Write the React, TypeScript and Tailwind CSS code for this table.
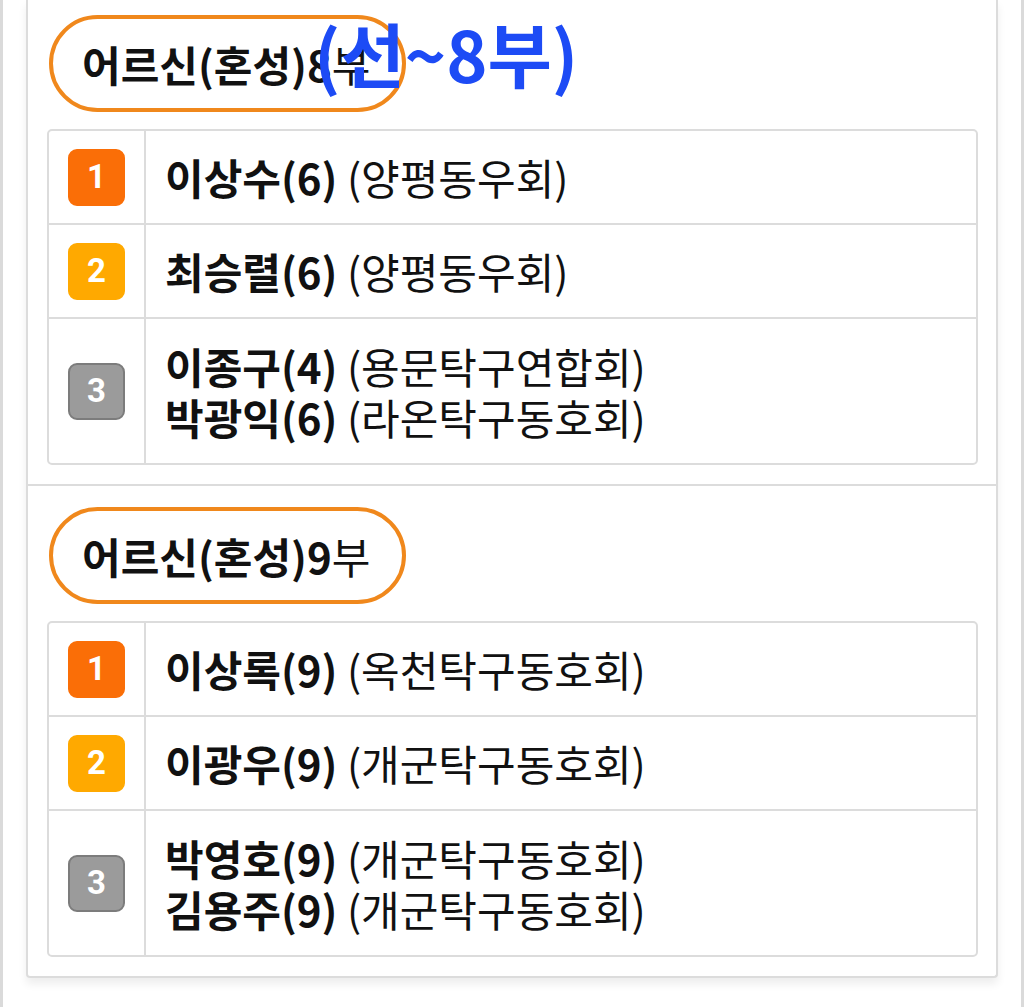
import React from "react";

type Entry = { name: string; score: string; club: string };
type Row = { rank: number; entries: Entry[] };
type Section = { title: string; num: string; rows: Row[]; overlay?: boolean };

const sections: Section[] = [
  {
    title: "어르신(혼성)",
    num: "8",
    overlay: true,
    rows: [
      { rank: 1, entries: [{ name: "이상수", score: "(6)", club: "(양평동우회)" }] },
      { rank: 2, entries: [{ name: "최승렬", score: "(6)", club: "(양평동우회)" }] },
      {
        rank: 3,
        entries: [
          { name: "이종구", score: "(4)", club: "(용문탁구연합회)" },
          { name: "박광익", score: "(6)", club: "(라온탁구동호회)" },
        ],
      },
    ],
  },
  {
    title: "어르신(혼성)",
    num: "9",
    rows: [
      { rank: 1, entries: [{ name: "이상록", score: "(9)", club: "(옥천탁구동호회)" }] },
      { rank: 2, entries: [{ name: "이광우", score: "(9)", club: "(개군탁구동호회)" }] },
      {
        rank: 3,
        entries: [
          { name: "박영호", score: "(9)", club: "(개군탁구동호회)" },
          { name: "김용주", score: "(9)", club: "(개군탁구동호회)" },
        ],
      },
    ],
  },
];

const font = { fontFamily: '"Noto Sans CJK KR", "Noto Sans", sans-serif' };

function Badge({ rank }: { rank: number }) {
  const cls =
    rank === 1
      ? "bg-[#fa6e07] border-[#fa6e07]"
      : rank === 2
      ? "bg-[#ffa900] border-[#ffa900]"
      : "bg-[#9b9b9b] border-[#7c7c7c]";
  return (
    <div
      className={`w-[57px] h-[57px] rounded-[9px] border-2 flex items-center justify-center text-white text-[33px] font-bold ${cls}`}
      style={{ fontFamily: 'Roboto, "Liberation Sans", sans-serif' }}
    >
      {rank}
    </div>
  );
}

function Table({ rows }: { rows: Row[] }) {
  return (
    <div className="border-2 border-[#dcdcdc] rounded-[5px] flex flex-col">
      {rows.map((r, i) => (
        <div key={i} className={`flex ${i > 0 ? "border-t-2 border-[#dcdcdc]" : ""}`}>
          <div className="w-[97px] shrink-0 flex items-center justify-center border-r-2 border-[#dcdcdc]">
            <Badge rank={r.rank} />
          </div>
          <div
            className={`flex-1 pl-[19px] py-[21px] text-[42px] text-[#111] ${
              r.entries.length > 1 ? "leading-[51px]" : "leading-[50px]"
            }`}
          >
            {r.entries.map((e, j) => (
              <div key={j} className="whitespace-nowrap">
                <span className="font-bold">
                  {e.name}
                  {e.score}
                </span>{" "}
                <span className="font-normal">{e.club}</span>
              </div>
            ))}
          </div>
        </div>
      ))}
    </div>
  );
}

function Pill({ title, num, overlay }: { title: string; num: string; overlay?: boolean }) {
  return (
    <div className="relative ml-[2px] w-[357px] h-[97px] rounded-full border-[4px] border-[#f0881c] flex items-center pl-[29px]">
      <span className="text-[42px] leading-[50px] text-[#111] whitespace-nowrap">
        <span className="font-semibold">{title}</span>
        <span className="font-bold">{num}</span>
        <span className="font-normal">부</span>
      </span>
      {overlay && (
        <span className="absolute left-[261px] top-[-6px] text-[70px] leading-[80px] font-bold text-[#1d4bf5] whitespace-nowrap">
          (선~8부)
        </span>
      )}
    </div>
  );
}

export default function App() {
  return (
    <div className="w-[1024px] h-[1007px] bg-white overflow-hidden" style={font}>
      <div className="h-full border-x-[3px] border-[#dadada] px-[23px]">
        <div className="border-2 border-t-0 border-[#dcdcdc] rounded-b-[4px] shadow-[0_6px_8px_rgba(0,0,0,0.07)] bg-white">
          {sections.map((s, i) => (
            <div
              key={i}
              className={`pl-[19px] pr-[18px] pb-[19px] ${i > 0 ? "border-t-2 border-[#dcdcdc] pt-[21px]" : "pt-[15px]"}`}
            >
              <Pill title={s.title} num={s.num} overlay={s.overlay} />
              <div className="mt-[17px]">
                <Table rows={s.rows} />
              </div>
            </div>
          ))}
        </div>
      </div>
    </div>
  );
}
